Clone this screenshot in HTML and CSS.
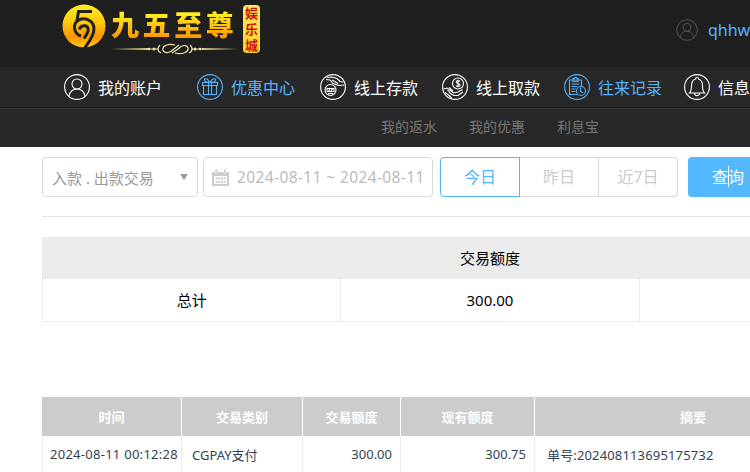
FILE: index.html
```
<!DOCTYPE html>
<html lang="zh-CN">
<head>
  <meta charset="UTF-8">
  <title>往来记录</title>
  <link rel="stylesheet" href="styles.css">
</head>
<body>

  <header class="header">
    <div class="logo">
      <svg class="logo-mark" width="44" height="44" viewBox="0 0 44 44" fill="none">
        <defs>
          <linearGradient id="gold" x1="0" y1="0" x2="0" y2="1">
            <stop offset="0" stop-color="#fff01f"/>
            <stop offset=".45" stop-color="#ffc40c"/>
            <stop offset=".75" stop-color="#ff9500"/>
            <stop offset="1" stop-color="#ffc71a"/>
          </linearGradient>
        </defs>
        <circle cx="22" cy="22" r="21.5" fill="url(#gold)"/>
        <g stroke="#222" stroke-width="3">
          <path d="M30 7.500H16.500L15 17"/>
          <path d="M19 32C11.500 30 10.500 20 16 16.500C22 12.500 32 16 32 25C32 31 28 37 22 45"/>
          <path d="M17.500 25.500C18 21 25.800 20 26.200 25.500C26.200 28.500 24.500 31 22 34.500"/>
        </g>
      </svg>
      <div class="logo-name">
        <div class="logo-text">九五至尊</div>
        <svg class="logo-line" width="128" height="12" viewBox="0 0 128 12" fill="none">
          <path d="M0 6L37 5V7ZM128 6L91 5V7Z" fill="#dccb83"/>
          <g stroke="#eee0a4" stroke-width="1.200">
            <path d="M35 6H48M80 6H92"/>
            <path d="M49 2C46 5 46 8 50 10M79 2C82 5 82 8 78 10"/>
            <path d="M64 2C57 0 51 3 52 7C54 12 60 9 63 6L68 2M64 10C71 12 78 9 77 5C75 0 70 3 67 6L61 10"/>
          </g>
          <g fill="#eee0a4"><circle cx="38" cy="6" r="1.300"/><circle cx="43" cy="6" r="1.500"/><circle cx="84" cy="6" r="1.500"/><circle cx="89" cy="6" r="1.300"/></g>
        </svg>
      </div>
      <div class="logo-tag"><span>娱</span><span>乐</span><span>城</span></div>
    </div>
    <div class="user">
      <svg width="22" height="22" viewBox="0 0 26 26" class="icon">
        <circle cx="13" cy="13" r="12.200"/>
        <circle cx="13" cy="9.800" r="4.600"/>
        <path d="M5 21.500C6 16.500 9 14.400 13 14.400S20 16.500 21 21.500"/>
      </svg>
      <span>qhhw</span>
    </div>
  </header>

  <nav class="nav">
    <a class="nav-item nav-account">
      <svg width="26" height="26" viewBox="0 0 26 26" class="icon">
        <circle cx="13" cy="13" r="12.400"/>
        <circle cx="13" cy="10" r="5"/>
        <path d="M5 22C6 17.500 9 15 13 15S20 17.500 21 22"/>
      </svg>
      <span>我的账户</span>
    </a>
    <a class="nav-item nav-promo active">
      <svg width="26" height="26" viewBox="0 0 26 26" class="icon">
        <circle cx="13" cy="13" r="12.400"/>
        <path d="M5.500 8.500H20.500V11.500H5.500ZM6.500 11.500V20.500H19.500V11.500M11.500 8.500V20.500M14.500 8.500V20.500M12.500 8.500C5 8 7 3.500 10 5C11.500 6 12 7 13 8.500C14 7 14.500 6 16 5C19 3.500 21 8 13.500 8.500"/>
      </svg>
      <span>优惠中心</span>
    </a>
    <a class="nav-item">
      <svg width="26" height="26" viewBox="0 0 26 26" class="icon">
        <circle cx="13" cy="13" r="12.400"/>
        <circle cx="10.500" cy="16" r="5.500"/>
        <path d="M7 14.500H14V17.500H7ZM8.500 17.500L10 14.500M11 17.500L12.500 14.500M8 19.500H13"/>
        <path d="M7 3.500L12 3L17 4.500L20 7.500L23.500 8M6 5.500L10 6L13 9.500L19 11.500L24.500 11M12 6L18 9.500"/>
      </svg>
      <span>线上存款</span>
    </a>
    <a class="nav-item">
      <svg width="26" height="26" viewBox="0 0 26 26" class="icon">
        <circle cx="13" cy="13" r="12.400"/>
        <circle cx="16" cy="9.500" r="5.500"/>
        <path d="M18 7.500C17 6 14.200 6.500 14.200 8C14.200 10 18 9 18 11C18 12.700 15 13 14 11.500M16 5.800V13.200"/>
        <path d="M1.500 15L5 14L9 17L11.500 19L16 18L20.500 15.500M5.500 16L9 20L12 21.500H16L21 18M3 18.500L7 21.500L10 24.500M7 13.500L11 17"/>
      </svg>
      <span>线上取款</span>
    </a>
    <a class="nav-item active">
      <svg width="26" height="26" viewBox="0 0 26 26" class="icon">
        <circle cx="13" cy="13" r="12.400"/>
        <path d="M13 20.500H5.500V6H17.500V12M9 6V4.500H10.500C10.500 3 12.700 3 12.700 4.500H14V7.500H9ZM7.500 10H15.500M7.500 12.500H13M7.500 15H11.500M7.500 17.500H11.500"/>
        <circle cx="17" cy="17" r="4.500"/>
        <path d="M16.500 14V17.500L19 19"/>
      </svg>
      <span>往来记录</span>
    </a>
    <a class="nav-item nav-message">
      <svg width="26" height="26" viewBox="0 0 26 26" class="icon">
        <circle cx="13" cy="13" r="12.400"/>
        <path d="M5.500 19C7 17.500 7.500 16 7.500 12C7.500 7.500 9.500 5.500 11.500 5C11.500 3 14.500 3 14.500 5C16.500 5.500 18.500 7.500 18.500 12C18.500 16 19 17.500 20.500 19ZM10.500 19.500C11 22.500 15 22.500 15.500 19.500"/>
      </svg>
      <span>信息</span>
    </a>
  </nav>

  <div class="subnav">
    <a>我的返水</a>
    <a>我的优惠</a>
    <a>利息宝</a>
  </div>

  <main class="main">
    <div class="filters">
      <div class="select"><span>入款 . 出款交易</span><i class="caret"></i></div>
      <div class="date">
        <svg width="17" height="17" viewBox="0 0 17 17">
          <path d="M0 3H17V17H0Z" fill="#ccc"/>
          <path d="M3 0H5.500V4H3ZM11.500 0H14V4H11.500Z" fill="#ccc" stroke="#fff" stroke-width=".6"/>
          <path d="M2 7H15V15H2Z" fill="#fff"/>
          <path d="M3.500 9.500H13.500M3.500 13H13.500" stroke="#ccc" stroke-width="2" stroke-dasharray="2 .7"/>
        </svg>
        <span>2024-08-11 ~ 2024-08-11</span>
      </div>
      <div class="range">
        <button class="range-btn selected">今日</button>
        <button class="range-btn">昨日</button>
        <button class="range-btn">近7日</button>
      </div>
      <button class="search">查询<i class="cursor"></i></button>
    </div>

    <table class="summary">
      <tr><th colspan="3">交易额度</th></tr>
      <tr><td>总计</td><td>300.00</td><td></td></tr>
    </table>

    <table class="records">
      <colgroup>
        <col class="col-time"><col class="col-type"><col class="col-amount"><col class="col-balance"><col class="col-note"><col>
      </colgroup>
      <tr>
        <th>时间</th><th>交易类别</th><th>交易额度</th><th>现有额度</th><th>摘要</th><th></th>
      </tr>
      <tr>
        <td class="time">2024-08-11 00:12:28</td>
        <td>CGPAY支付</td>
        <td class="num">300.00</td>
        <td class="num">300.75</td>
        <td class="note">单号:202408113695175732</td>
        <td></td>
      </tr>
    </table>
  </main>

</body>
</html>
```
FILE: styles.css
```
* {
  box-sizing: border-box;
}

body {
  margin: 0;
  height: 472px;
  overflow: hidden;
  background: #fff;
  font-family: "Noto Sans", "Noto Sans CJK SC", sans-serif;
  font-size: 16px;
}

button {
  font: inherit;
  padding: 0;
}

.icon {
  fill: none;
  stroke: currentColor;
  stroke-width: 1.1;
  flex: none;
}

/* Header */
.header {
  display: flex;
  height: 67px;
  background: #1f1f1f;
}

.logo {
  display: flex;
  flex: none;
  width: 676px;
  padding: 4px 0 0 62px;
}

.logo-name {
  width: 137px;
  padding-left: 5px;
}

.logo-text {
  height: 39px;
  line-height: 42px;
  font-size: 28px;
  font-weight: 900;
  letter-spacing: 3.6px;
  white-space: nowrap;
  background: linear-gradient(#fff01f 25%, #ff9800 85%);
  -webkit-background-clip: text;
  background-clip: text;
  color: transparent;
}

.logo-line {
  display: block;
}

.logo-tag {
  display: flex;
  flex-direction: column;
  align-items: center;
  width: 17px;
  height: 48px;
  margin-top: 1px;
  border-radius: 4px;
  background: linear-gradient(#ffe96b, #ffd21c);
  color: #c8160c;
  font-family: "Noto Sans CJK SC", sans-serif;
  font-size: 13px;
  font-weight: 700;
  line-height: 16px;
}

.user {
  display: flex;
  align-items: center;
  height: 60px;
  gap: 10px;
  color: #54b4ff;
  font-size: 16px;
}

.user .icon {
  color: #565656;
}

/* Navigation */
.nav {
  display: flex;
  gap: 24px;
  height: 41px;
  padding-left: 64px;
  background: #282828;
  border-bottom: 1px solid #121212;
}

.nav-item {
  display: flex;
  flex: none;
  align-items: center;
  gap: 8px;
  color: #fff;
  white-space: nowrap;
}

.nav-account {
  margin-right: 11px;
}

.nav-promo {
  margin-right: 1px;
}

.nav-message {
  margin-left: -2px;
}

.nav-item.active {
  color: #54b4ff;
}

.subnav {
  display: flex;
  gap: 32px;
  height: 39px;
  padding-left: 381px;
  background: #282828;
  border-top: 1px solid #353535;
  color: #777;
  font-size: 14px;
  line-height: 35px;
}

/* Filters */
.main {
  width: 896px;
  margin-left: 42px;
}

.filters {
  display: flex;
  height: 70px;
  padding-top: 10px;
  border-bottom: 1px solid #e6e6e6;
}

.select,
.date {
  display: flex;
  align-items: center;
  height: 40px;
  border: 1px solid #d9d9d9;
  border-radius: 4px;
  white-space: nowrap;
}

.select {
  justify-content: space-between;
  width: 156px;
  margin-right: 5px;
  padding: 0 9px;
  color: #999;
  font-size: 15px;
}

.caret {
  border: 4px solid transparent;
  border-top: 6px solid #999;
  border-bottom: 0;
}

.date {
  width: 230px;
  margin-right: 7px;
  padding-left: 8px;
  gap: 8px;
  color: #bbb;
  font-size: 15.5px;
  letter-spacing: 0.39px;
}

.range {
  display: flex;
  margin-right: 10px;
}

.range-btn {
  width: 79px;
  height: 40px;
  border: 1px solid #d9d9d9;
  border-left: 0;
  background: #fff;
  color: #ccc;
}

.range-btn:last-child {
  border-radius: 0 4px 4px 0;
}

.range-btn.selected {
  width: 80px;
  border: 1px solid #54b4ff;
  border-radius: 4px 0 0 4px;
  color: #54b4ff;
}

.search {
  position: relative;
  width: 80px;
  height: 40px;
  border: 0;
  border-radius: 4px;
  background: #54b8ff;
  color: #fff;
}

.range-btn,
.search {
  padding-bottom: 2px;
}

.cursor {
  position: absolute;
  left: 40px;
  top: 9px;
  width: 1px;
  height: 21px;
  background: #fff;
}

/* Tables */
table {
  width: 100%;
  border-collapse: collapse;
  table-layout: fixed;
}

.summary {
  margin-top: 20px;
  font-size: 15px;
}

.summary th {
  height: 41px;
  padding: 0 0 2px;
  border: 1px solid #ebebeb;
  background: #ebebeb;
  font-weight: 400;
}

.summary td {
  height: 43px;
  padding: 0 0 1px;
  border: 1px solid #ebebeb;
  text-align: center;
}

.records {
  margin-top: 75px;
  border-collapse: separate;
  border-spacing: 0;
  color: #333f52;
  font-size: 13px;
}

.col-time {
  width: 140px;
}

.col-type {
  width: 121px;
}

.col-amount {
  width: 98px;
}

.col-balance {
  width: 134px;
}

.col-note {
  width: 317px;
}

.records th {
  height: 39px;
  padding: 0 0 1px;
  background: #ccc;
  border-right: 1px solid #fff;
  color: #fff;
}

.records td {
  height: 39px;
  padding: 0 10px 3px;
  border-right: 1px solid #ebebeb;
  white-space: nowrap;
}

.records .time {
  padding-left: 7px;
  padding-right: 0;
  border-left: 1px solid #ebebeb;
  letter-spacing: 0.27px;
}

.records .num {
  padding-right: 8px;
  text-align: right;
}

.records .note {
  padding-left: 12px;
  letter-spacing: 0.15px;
}
```
